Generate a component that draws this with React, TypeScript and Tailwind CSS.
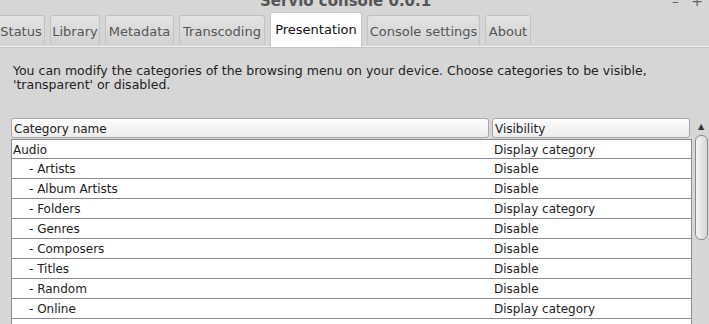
const tabs = [
  { label: "Status", w: "w-[48px] -ml-[3px]" },
  { label: "Library", w: "w-[50px]" },
  { label: "Metadata", w: "w-[69px]" },
  { label: "Transcoding", w: "w-[86px]" },
  { label: "Presentation", w: "w-[92px]", active: true },
  { label: "Console settings", w: "w-[113px]" },
  { label: "About", w: "w-[46px]" },
];

const rows = [
  { name: "Audio", vis: "Display category", top: true },
  { name: "- Artists", vis: "Disable" },
  { name: "- Album Artists", vis: "Disable" },
  { name: "- Folders", vis: "Display category" },
  { name: "- Genres", vis: "Disable" },
  { name: "- Composers", vis: "Disable" },
  { name: "- Titles", vis: "Disable" },
  { name: "- Random", vis: "Disable" },
  { name: "- Online", vis: "Display category" },
  { name: "", vis: "" },
];

export default function App() {
  return (
    <div
      className="w-[709px] h-[324px] overflow-hidden bg-[#d6d6d6] text-[12px] text-[#222]"
      style={{ fontFamily: '"DejaVu Sans", Verdana, sans-serif' }}
    >
      {/* title bar, cut off at top */}
      <div className="relative h-[13px]">
        <div className="absolute left-[260px] -top-[10px] font-bold text-[15px] text-[#555]">Servio console 0.0.1</div>
        <div className="absolute right-[30px] -top-[9px] text-[14px] text-[#666]">–</div>
        <div className="absolute right-[6px] -top-[9px] text-[14px] text-[#666]">+</div>
      </div>

      {/* tabs */}
      <div className="flex items-end gap-[5px] h-[34px] border-b border-[#f2f2f2] shadow-[0_1px_0_#c4c4c4] text-[13px]">
        {tabs.map((t) =>
          t.active ? (
            <div
              key={t.label}
              className={`${t.w} h-[35px] -mb-px bg-white rounded-t-[3px] border border-b-0 border-[#c8c8c8] flex items-center justify-center text-[#111]`}
            >
              {t.label}
            </div>
          ) : (
            <div
              key={t.label}
              className={`${t.w} h-[30px] mb-px rounded-t-[3px] border border-b-0 border-[#c2c2c2] bg-gradient-to-b from-[#e3e3e3] to-[#d2d2d2] flex items-center justify-center text-[#555] pt-[2px]`}
            >
              {t.label}
            </div>
          )
        )}
      </div>

      {/* description */}
      <div className="pl-[13px] pt-[17px] leading-[14px] text-[12.5px] text-[#222]">
        <p>You can modify the categories of the browsing menu on your device. Choose categories to be visible,</p>
        <p>'transparent' or disabled.</p>
      </div>

      {/* table */}
      <div className="flex mt-[26px] pl-[11px]">
        <div className="w-[682px]">
          <div className="flex gap-[3px] h-[20px]">
            <div className="w-[478px] rounded-[3px] border border-[#a8a8a8] bg-gradient-to-b from-[#fdfdfd] to-[#ececec] flex items-center pl-[2px] pt-[1px] text-[#222]">
              Category name
            </div>
            <div className="w-[198px] rounded-[3px] border border-[#a8a8a8] bg-gradient-to-b from-[#fdfdfd] to-[#ececec] flex items-center pl-[2px] pt-[1px] text-[#222]">
              Visibility
            </div>
          </div>
          <div className="mt-[1px] bg-white border-l border-r border-[#8c8c8c]">
            {rows.map((r, i) => (
              <div
                key={i}
                className={`flex h-[20px] items-center pt-[1px] border-b border-[#8c8c8c] ${i === 0 ? "border-t" : ""}`}
              >
                <div className={`w-[481px] ${r.top ? "pl-[1px]" : "pl-[17px]"}`}>{r.name}</div>
                <div className="pl-[1px]">{r.vis}</div>
              </div>
            ))}
          </div>
        </div>
        {/* scrollbar */}
        <div className="w-[16px] ml-[1px] flex flex-col items-center">
          <div className="h-[14px] mt-[2px] flex items-center justify-center text-[8px] text-[#333]">▲</div>
          <div className="w-[13px] h-[105px] mt-[1px] rounded-[6px] border border-[#8a8a8a] bg-gradient-to-r from-[#f4f4f4] to-[#d8d8d8]"></div>
        </div>
      </div>
    </div>
  );
}
